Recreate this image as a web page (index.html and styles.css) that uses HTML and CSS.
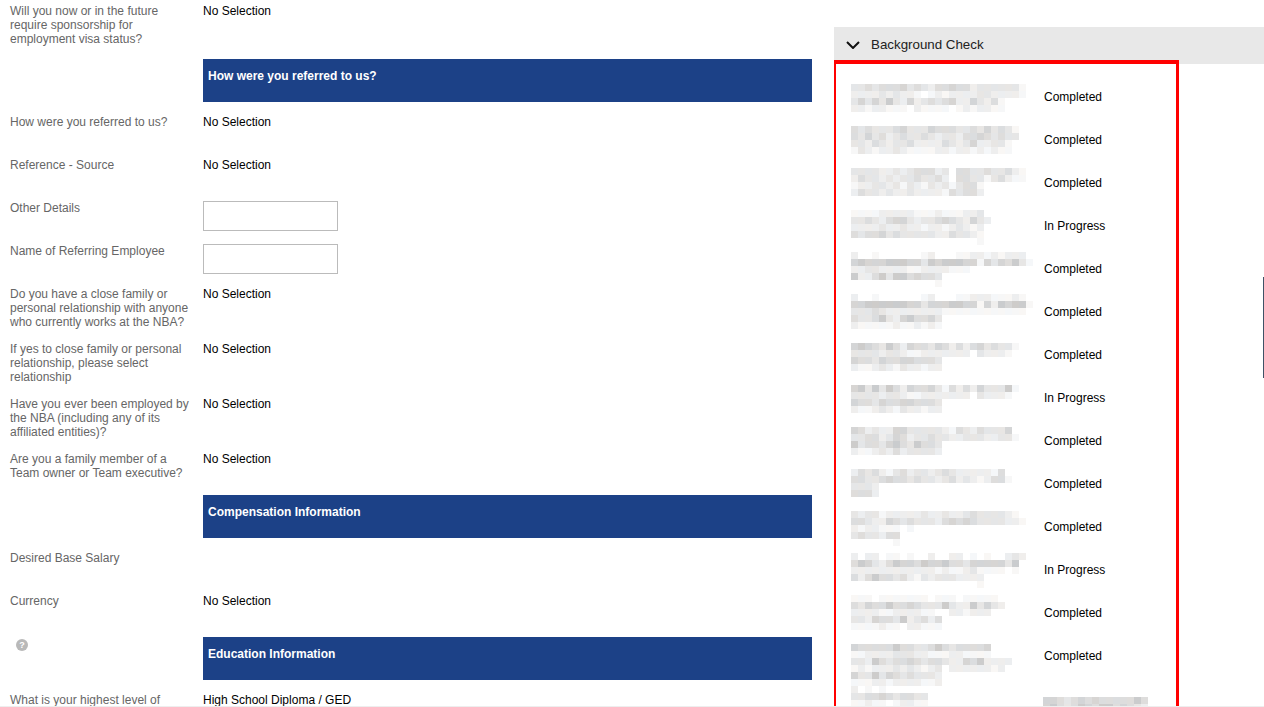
FILE: index.html
```html
<!DOCTYPE html>
<html lang="en">
<head>
<meta charset="utf-8">
<title>Candidate Application</title>
<link rel="stylesheet" href="styles.css">
</head>
<body>
<div class="page">
  <main class="form">
    <div class="label">Will you now or in the future require sponsorship for employment visa status?</div>
    <div class="value">No Selection</div>

    <div class="label"></div>
    <h2 class="section">How were you referred to us?</h2>

    <div class="label">How were you referred to us?</div>
    <div class="value">No Selection</div>

    <div class="label">Reference - Source</div>
    <div class="value">No Selection</div>

    <div class="label">Other Details</div>
    <div class="value"><input class="field" type="text" aria-label="Other Details"></div>

    <div class="label">Name of Referring Employee</div>
    <div class="value"><input class="field" type="text" aria-label="Name of Referring Employee"></div>

    <div class="label">Do you have a close family or personal relationship with anyone who currently works at the NBA?</div>
    <div class="value">No Selection</div>

    <div class="label">If yes to close family or personal relationship, please select relationship</div>
    <div class="value">No Selection</div>

    <div class="label">Have you ever been employed by the NBA (including any of its affiliated entities)?</div>
    <div class="value">No Selection</div>

    <div class="label">Are you a family member of a Team owner or Team executive?</div>
    <div class="value">No Selection</div>

    <div class="label"></div>
    <h2 class="section">Compensation Information</h2>

    <div class="label">Desired Base Salary</div>
    <div class="value"></div>

    <div class="label">Currency</div>
    <div class="value">No Selection</div>

    <div class="label"><span class="help">?</span></div>
    <h2 class="section">Education Information</h2>

    <div class="label">What is your highest level of</div>
    <div class="value">High School Diploma / GED</div>
  </main>

  <aside class="panel">
    <header class="panel-head">
      <svg class="chevron" width="14" height="8" viewBox="0 0 14 8" aria-hidden="true"><path d="M1 1l6 6 6-6" fill="none" stroke="#111" stroke-width="2"/></svg>
      <span>Background Check</span>
    </header>
    <div class="checks">
      <div class="check">Completed</div>
      <div class="check">Completed</div>
      <div class="check">Completed</div>
      <div class="check">In Progress</div>
      <div class="check">Completed</div>
      <div class="check">Completed</div>
      <div class="check">Completed</div>
      <div class="check">In Progress</div>
      <div class="check">Completed</div>
      <div class="check">Completed</div>
      <div class="check">Completed</div>
      <div class="check">In Progress</div>
      <div class="check">Completed</div>
      <div class="check">Completed</div>
      <div class="check"><canvas id="statusBlur" class="status-blur" width="105" height="14"></canvas></div>
    </div>
    <canvas id="namesBlur" class="names-blur" width="182" height="623"></canvas>
    <div class="redbox"></div>
  </aside>
</div>
<div class="scroll-thumb"></div>
<div class="bottom-line"></div>
<script src="script.js"></script>
</body>
</html>
```
FILE: styles.css
```css
* { box-sizing: border-box; }
html, body { margin: 0; height: 707px; overflow: hidden; background: #fff; }
body { font: 12px/14px "Liberation Sans", Arial, sans-serif; color: #000; }
.page { display: flex; align-items: flex-start; height: 707px; }

.form {
  width: 812px;
  flex: none;
  display: grid;
  grid-template-columns: 203px 609px;
  grid-auto-rows: minmax(30px, auto);
  row-gap: 13px;
  padding-top: 4px;
}
.label { color: #666; padding: 0 10px; }
.value { color: #000; }
.section {
  margin: 0;
  height: 43px;
  padding: 10px 5px 0;
  background: #1c4187;
  color: #fff;
  font-size: 12px;
  line-height: 14px;
  font-weight: bold;
}
.field {
  display: block;
  width: 135px;
  height: 30px;
  border: 1px solid #bbb;
  background: #fff;
  padding: 0 4px;
  font: inherit;
}
.help {
  display: block;
  width: 12px;
  height: 12px;
  margin: 2px 0 0 6px;
  border-radius: 50%;
  background: #b9b9b9;
  color: #fff;
  font-size: 9px;
  line-height: 12px;
  font-weight: bold;
  text-align: center;
}

.panel { position: relative; margin-left: 22px; flex: 1; margin-top: 27px; }
.panel-head {
  display: flex;
  align-items: center;
  gap: 11px;
  height: 37px;
  padding: 0 0 1px 12px;
  background: #e8e8e8;
  font-size: 13.33px;
  line-height: 16px;
  color: #222;
}
.chevron { flex: none; }
.checks { padding-top: 26px; }
.check { height: 43px; padding-left: 210px; color: #000; }
.status-blur { display: block; margin: 5px 0 0 -1px; }
.names-blur { position: absolute; left: 17px; top: 57px; }
.redbox {
  position: absolute;
  left: 0;
  top: 33px;
  width: 345px;
  height: 660px;
  border: 3px solid #f00;
  border-left-width: 2px;
  border-top-width: 4px;
}
.scroll-thumb { position: fixed; right: 0; top: 277px; width: 1px; height: 101px; background: #3f5266; }
.bottom-line { position: fixed; left: 0; right: 0; bottom: 0; height: 1px; background: #eee; }
```
FILE: script.js
```js
// Redacted (pixelated) areas: each digit is a darkness level per 7px cell.
var CELL = 7;
var names = [
  [0, ["3343444534324454423333331", "2222323221012122223322221", "3535363252343452253241", "2212211102111101212211"]],
  [6, ["434333453335444334353431", "435342343343233244543433", "33243233422224323522331", "13212232111122122121211"]],
  [12, ["33332232344423.4433433421", "24332323343342.4433134211", "1223323132132313441", "2433232232222143442"]],
  [18, ["1111222221112111223", "33432455323345432532", "2222322322122123212", "4344534333332243321", "..................1"]],
  [24, ["2..1......12...1122121222", "56555666553656665515354631", "22332222112222111", "6224636645443", "............1"]],
  [30, ["2..1......12...1122211121", "55666666553555665515265661", "3334322222222111111111111", "4334632564453", "2111112112121"]],
  [37, ["565436425443542424534331", "33332332112222222.32221", "5443544554443", "2112321322122"]],
  [43, ["563636425445314242533361", "33332332112222222.32221", "5443544554443", "2112321322122"]],
  [49, ["54232255333332143243335", "334423542334332233322331", "6344356436443", "2112324233332"]],
  [55, ["2434213423323432222214", "44334544343323423212441", "3332", "4442"]],
  [61, ["323312222232232234333321", "4432254343332454543333221", "2122111.1", "3433244", "......1"]],
  [67, ["2.22.11.1..2..22.1.1..232", "465324655465564435555536", "2222222222221211231111.1", "4246443421323332222", "..................1"]],
  [73, ["111.1111111.111.11111", "4354464454333632263532", "222211222211..221222", "3325443623424", "1111211.22111"]],
  [80, ["54444464433464344445", "11222233322111221111", "33264344543443225462222", "1212223232123.22222212", "5336354343332", "1112212222112", "2.1.1..", "33445434433", "11211.12211"]]
];
var statusRows = ["554345454444464", "564346546645432"];

function shade(d, i, j) {
  var g = 255 - d * 8.5;
  var t = ((i * 7 + j * 13) % 5) - 2;
  return "rgb(" + Math.round(g + t) + "," + Math.round(g) + "," + Math.round(g - t) + ")";
}

function paint(ctx, rows, top) {
  rows.forEach(function (row, j) {
    for (var i = 0; i < row.length; i++) {
      var d = parseInt(row[i], 10);
      if (d > 0) {
        ctx.fillStyle = shade(d, i, j + top);
        ctx.fillRect(i * CELL, (top + j) * CELL, CELL, CELL);
      }
    }
  });
}

var namesCtx = document.getElementById("namesBlur").getContext("2d");
names.forEach(function (block) { paint(namesCtx, block[1], block[0]); });
paint(document.getElementById("statusBlur").getContext("2d"), statusRows, 0);
```
